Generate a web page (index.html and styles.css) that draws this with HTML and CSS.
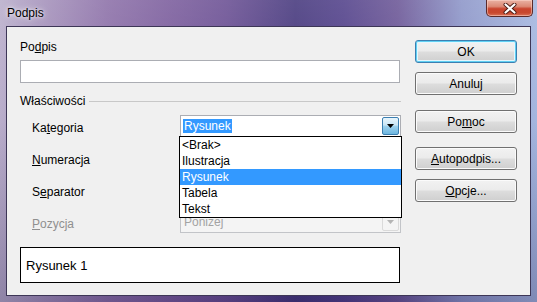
FILE: index.html
```html
<!DOCTYPE html>
<html lang="pl">
<head>
<meta charset="UTF-8">
<title>Podpis</title>
<link rel="stylesheet" href="styles.css">
</head>
<body>

<div class="window">

  <!-- TITLE BAR -->
  <div class="titlebar">
    <span class="title">Podpis</span>
    <button class="close">
      <svg width="14" height="11" viewBox="0 0 14 11">
        <path d="M2.5 1.5 L11.5 9.5 M11.5 1.5 L2.5 9.5" stroke="#4a1a14" stroke-width="4" stroke-linecap="round"/>
        <path d="M2.5 1.5 L11.5 9.5 M11.5 1.5 L2.5 9.5" stroke="#fff" stroke-width="2.2" stroke-linecap="round"/>
      </svg>
    </button>
  </div>

  <!-- CLIENT -->
  <div class="client">

    <div class="main">
      <div class="field-label">Po<u>d</u>pis</div>
      <div class="textbox"></div>

      <div class="group-head"><span>Właściwości</span></div>

      <div class="props">
        <span class="lbl">Ka<u>t</u>egoria</span>
        <div class="combo">
          <span class="sel">Rysunek</span>
          <span class="arrow hot"><svg width="7" height="4" viewBox="0 0 7 4"><path d="M0 0 H7 L3.5 4 Z" fill="#000"/></svg></span>
          <ul class="dropdown">
            <li>&lt;Brak&gt;</li>
            <li>Ilustracja</li>
            <li class="active">Rysunek</li>
            <li>Tabela</li>
            <li>Tekst</li>
          </ul>
        </div>

        <span class="lbl"><u>N</u>umeracja</span>
        <div class="combo"></div>

        <span class="lbl">S<u>e</u>parator</span>
        <div class="combo"></div>

        <span class="lbl disabled"><u>P</u>ozycja</span>
        <div class="combo off">
          <span class="val">Poniżej</span>
          <span class="arrow"><svg width="7" height="4" viewBox="0 0 7 4"><path d="M0 0 H7 L3.5 4 Z" fill="#b4b4b4"/></svg></span>
        </div>
      </div>

      <div class="preview">Rysunek 1</div>
    </div>

    <div class="buttons">
      <button class="btn default">OK</button>
      <button class="btn">Anuluj</button>
      <button class="btn gap-l">Po<u>m</u>oc</button>
      <button class="btn gap"><u>A</u>utopodpis...</button>
      <button class="btn"><u>O</u>pcje...</button>
    </div>

  </div>

</div>

</body>
</html>
```

FILE: styles.css
```css
body{
 margin:0;
 font-family:'Liberation Sans',Arial,sans-serif;
 font-size:12px;
 color:#000;
 background:#6a5a96;
}

/* WINDOW FRAME */
.window{
 width:537px;
 height:302px;
 box-sizing:border-box;
 padding:0 6px 6px 6px;
 display:flex;
 flex-direction:column;
 background:
  linear-gradient(180deg,rgba(255,255,255,0.12),rgba(255,255,255,0) 40%,rgba(20,10,60,0.25)),
  linear-gradient(90deg,#b9aecb 0%,#a592bb 8%,#8c70a8 20%,#7a5c9c 32%,#6a4f93 42%,#46387d 55%,#52418a 64%,#6b5696 74%,#8c95c8 86%,#a4b6df 100%);
}

.titlebar{
 height:26px;
 display:flex;
 justify-content:space-between;
 align-items:flex-start;
}

.title{
 padding:6px 0 0 1px;
 line-height:15px;
 text-shadow:0 0 6px rgba(255,255,255,0.9),0 0 3px rgba(255,255,255,0.7);
}

.close{
 width:47px;
 height:17px;
 margin-right:-2px;
 padding:0;
 border:1px solid #5a2a2a;
 border-top:none;
 border-radius:0 0 5px 5px;
 background:linear-gradient(180deg,#eab2a4 0%,#dc8a76 40%,#c9442e 55%,#c8482f 80%,#d9735a 100%);
 box-shadow:inset 0 0 0 1px rgba(255,220,210,0.5);
 display:flex;
 align-items:center;
 justify-content:center;
}

/* CLIENT */
.client{
 flex:1;
 display:flex;
 background:#f0f0f0;
 border:1px solid #3d3656;
}

.main{
 width:381px;
 padding:12px 0 0 13px;
}

.field-label{
 line-height:16px;
}

.textbox{
 margin-top:5px;
 width:380px;
 height:23px;
 box-sizing:border-box;
 background:#fff;
 border:1px solid #abadb3;
}

.group-head{
 margin-top:10px;
 height:16px;
 display:flex;
 align-items:center;
}

.group-head::after{
 content:"";
 flex:1;
 margin-left:4px;
 border-top:1px solid #c8c8c8;
}

/* PROPERTY ROWS */
.props{
 margin-top:6px;
 padding-left:12px;
 display:grid;
 grid-template-columns:148px 221px;
 grid-auto-rows:22px;
 row-gap:10px;
 align-items:center;
}

.lbl{
 padding-top:3px;
}

.lbl.disabled{
 color:#8f8f8f;
}

.combo{
 position:relative;
 height:22px;
 box-sizing:border-box;
 background:#fff;
 border:1px solid #abadb3;
 display:flex;
 align-items:center;
 justify-content:space-between;
 padding-left:2px;
}

.combo.off{
 background:#f4f4f4;
 border-color:#c2c4c8;
 color:#a3a3a3;
}

.sel{
 background:#3399ff;
 color:#fff;
 line-height:14px;
 padding:0 1px;
}

.val{
 padding-left:1px;
}

.arrow{
 width:17px;
 height:18px;
 margin-right:1px;
 box-sizing:border-box;
 display:flex;
 align-items:center;
 justify-content:center;
 border:1px solid #dadada;
 border-radius:2px;
}

.arrow.hot{
 border-color:#3c7fb1;
 background:linear-gradient(180deg,#e8f5fc 0%,#c9e6f6 45%,#9fd3ef 50%,#6db6df 100%);
}

.dropdown{
 position:absolute;
 z-index:2;
 top:20px;
 left:-2px;
 width:223px;
 box-sizing:border-box;
 margin:0;
 padding:0;
 list-style:none;
 background:#fff;
 border:1px solid #000;
}

.dropdown li{
 height:16px;
 line-height:16px;
 padding-left:2px;
}

.dropdown li.active{
 background:#3399ff;
 color:#fff;
}

.preview{
 margin-top:14px;
 width:380px;
 height:36px;
 box-sizing:border-box;
 background:#fff;
 border:1px solid #000;
 padding-left:5px;
 display:flex;
 align-items:center;
 font-size:13px;
}

/* BUTTONS */
.buttons{
 margin-left:14px;
 padding-top:13px;
 display:flex;
 flex-direction:column;
 gap:9px;
}

.btn{
 width:102px;
 height:23px;
 padding:0;
 font-family:inherit;
 font-size:12px;
 color:#000;
 border:1px solid #707070;
 border-radius:3px;
 background:linear-gradient(180deg,#f2f2f2 0%,#ebebeb 48%,#dddddd 52%,#cfcfcf 100%);
 box-shadow:inset 0 0 0 1px #fbfbfb;
}

.btn.default{
 border-color:#3c7fb1;
 box-shadow:inset 0 0 0 1px #5fd0f3,inset 0 0 0 2px #e4f6fd;
}

.btn.gap-l{
 margin-top:6px;
}

.btn.gap{
 margin-top:5px;
}
```
